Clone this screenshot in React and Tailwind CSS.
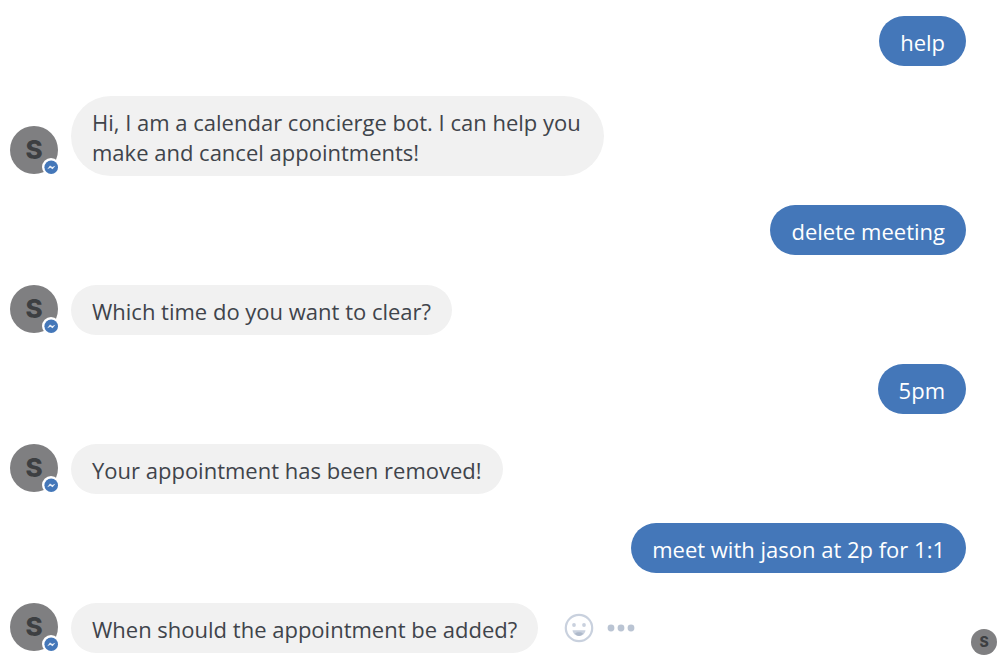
import React from "react";

const messages = [
  { from: "user", text: "help" },
  { from: "bot", text: "Hi, I am a calendar concierge bot. I can help you make and cancel appointments!" },
  { from: "user", text: "delete meeting" },
  { from: "bot", text: "Which time do you want to clear?" },
  { from: "user", text: "5pm" },
  { from: "bot", text: "Your appointment has been removed!" },
  { from: "user", text: "meet with jason at 2p for 1:1" },
  { from: "bot", text: "When should the appointment be added?" },
];

function MessengerBadge() {
  return (
    <svg viewBox="0 0 18 18" className="absolute -right-0.5 -bottom-0.5 size-[18px]" aria-hidden="true">
      <circle cx="9" cy="9" r="9" fill="#fff" />
      <circle cx="9.2" cy="9.2" r="6.8" fill="#4477b9" />
      <path d="M5.2 11.200 8 7.400l2.200 1.500 3.200-1.200-2.800 3.500-2.200-1.500z" fill="#e8eef7" />
    </svg>
  );
}

function Avatar() {
  return (
    <div className="relative mb-0.5 flex size-12 shrink-0 items-center justify-center rounded-full bg-[#7f7f81] font-[Inter,sans-serif] text-[26px] leading-none font-extrabold text-[#3d3f42]">
      S
      <MessengerBadge />
    </div>
  );
}

function Actions() {
  return (
    <div className="ml-[26px] flex h-[50px] shrink-0 items-center gap-[13px] text-[#c9d1de]">
      <button type="button" aria-label="Add reaction">
        <svg viewBox="0 0 30 30" className="block size-[30px]" fill="none">
          <circle cx="15" cy="15" r="13.2" stroke="currentColor" strokeWidth="2.2" />
          <circle cx="10" cy="12" r="1.9" fill="currentColor" />
          <circle cx="20" cy="12" r="1.9" fill="currentColor" />
          <path d="M8.5 17.3h13c-.5 3.500-3 5.700-6.500 5.700s-6-2.200-6.500-5.700z" fill="currentColor" />
          <path d="M11 20.500c1-.9 2.400-1.300 4-1.300s3 .4 4 1.300c-.8 1.500-2.200 2.500-4 2.500s-3.200-1-4-2.500z" fill="#aeb9ca" />
        </svg>
      </button>
      <button type="button" aria-label="More options">
        <svg viewBox="0 0 28 8" className="block h-2 w-7" fill="#bac4d3">
          <circle cx="4" cy="4" r="3.4" />
          <circle cx="14" cy="4" r="3.4" />
          <circle cx="24" cy="4" r="3.4" />
        </svg>
      </button>
    </div>
  );
}

function UserMessage({ text }) {
  return (
    <li className="mt-[29px] flex justify-end pr-[34px] pl-[72px] first:mt-0">
      <p className="rounded-[25px] bg-[#4477b9] px-[21px] pt-[11px] pb-[9px] text-white">{text}</p>
    </li>
  );
}

function BotMessage({ text, last }) {
  return (
    <li className="mt-[30px] flex items-end pr-[3px] pl-2.5">
      <Avatar />
      <p className="ml-[13px] max-w-[533px] rounded-[40px] bg-[#f1f1f1] px-[21px] pt-[11px] pb-[9px] text-[#3f444b]">{text}</p>
      {last && <Actions />}
      {last && (
        <span className="-mb-0.5 ml-auto flex size-[26px] shrink-0 items-center justify-center rounded-full bg-[#7f7f81] font-[Inter,sans-serif] text-[14px] leading-none font-extrabold text-[#3d3f42]">
          S
        </span>
      )}
    </li>
  );
}

export default function App() {
  return (
    <main className="min-h-screen bg-white font-['Open_Sans',sans-serif] text-[22px] leading-[30px]">
      <ul className="flex flex-col pt-4 pb-2">
        {messages.map((m, i) =>
          m.from === "user" ? (
            <UserMessage key={i} text={m.text} />
          ) : (
            <BotMessage key={i} text={m.text} last={i === messages.length - 1} />
          )
        )}
      </ul>
    </main>
  );
}
